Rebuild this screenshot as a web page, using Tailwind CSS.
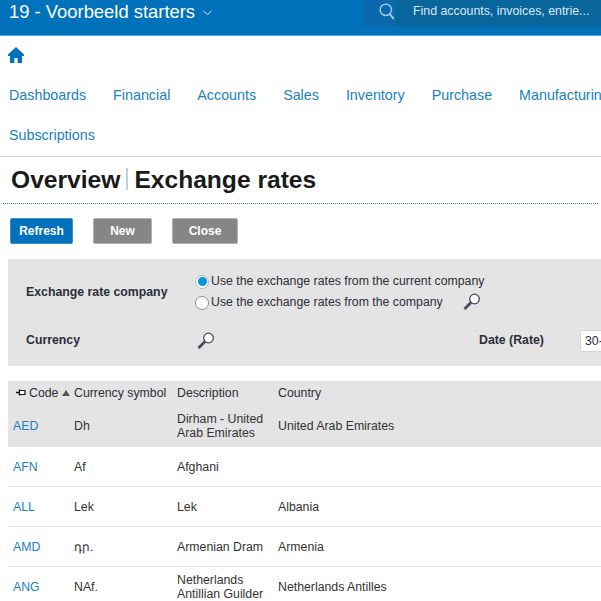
<!DOCTYPE html>
<html lang="en">
<head>
  <meta charset="UTF-8">
  <title>Exchange rates</title>
  <script src="https://cdn.jsdelivr.net/npm/@tailwindcss/browser@4"></script>
</head>
<body class="bg-white w-[601px] h-[601px] overflow-hidden font-['Liberation_Sans',Arial,sans-serif] text-[#333]">
  <!-- Top bar -->
  <header class="h-[36px] bg-[#0072bc] border-b border-[#5ba6d8] flex items-start justify-between">
    <div class="flex items-center h-[23px] pl-[9px] text-white text-[18.4px] leading-[23px]">
      <span>19 - Voorbeeld starters</span>
      <svg class="ml-[8px] mt-[3px]" width="9" height="6" viewBox="0 0 9 6" fill="none" stroke="#cfe4f3" stroke-width="1"><path d="M.5 1l4 3.5 4-3.5"/></svg>
    </div>
    <div class="w-[238px] h-[27px] flex bg-[#08669c]">
      <div class="w-[33px] h-full bg-[#0b68ac] flex items-start justify-end pt-[3px] pr-[1px]">
        <svg width="16" height="17" viewBox="0 0 16 17" fill="none" stroke="#a9d0ea" stroke-width="1.400"><circle cx="6.800" cy="6.800" r="5.700"/><path d="M10.800 11.200l4 4.600" stroke-width="2"/></svg>
      </div>
      <span class="pl-[17px] text-[#dde9f2] text-[12.35px] leading-[22px] whitespace-nowrap">Find accounts, invoices, entrie...</span>
    </div>
  </header>

  <!-- Home -->
  <div class="h-[38px] pl-[8px] pt-[11px]">
    <svg width="16" height="16" viewBox="0 0 16 16" fill="#0072bc"><path d="M8 0L0 7.600V9h2v7h4.400v-5h3.200v5H14V9h2V7.600z"/></svg>
  </div>

  <!-- Module nav -->
  <nav class="h-[83px] border-b border-[#d4d4d4] text-[#1b81c0] text-[14.3px] leading-[40px] pl-[9px] pt-[1px] overflow-hidden">
    <div class="flex gap-[27px] whitespace-nowrap">
      <a>Dashboards</a><a>Financial</a><a>Accounts</a><a>Sales</a><a>Inventory</a><a>Purchase</a><a>Manufacturing</a>
    </div>
    <div><a>Subscriptions</a></div>
  </nav>

  <!-- Page title -->
  <div class="mx-[3px] h-[47px] border-b border-dotted border-[#55808f] pl-[8px] pt-[8px] flex items-start text-[24.6px] leading-[29px] font-bold text-[#1a1a1a]">
    <span>Overview</span>
    <span class="w-[2px] h-[22px] mt-[3px] mx-[6px] bg-[#bcd3e2]"></span>
    <span>Exchange rates</span>
  </div>

  <!-- Buttons -->
  <div class="flex gap-[20px] pl-[10px] pt-[14px] text-white text-[12px] font-bold">
    <button class="w-[63px] h-[26px] rounded-[2px] bg-[#0072bc] border border-[#3d92c9]">Refresh</button>
    <button class="w-[59px] h-[26px] rounded-[2px] bg-[#868686] border border-[#b0b0b0]">New</button>
    <button class="w-[66px] h-[26px] rounded-[2px] bg-[#868686] border border-[#b0b0b0]">Close</button>
  </div>

  <!-- Filter panel -->
  <section class="ml-[8px] mt-[15px] h-[107px] bg-[#e4e4e4] bg-[radial-gradient(#d9d9d9_0.6px,transparent_0.7px)] bg-[size:11px_11px] text-[12.3px] text-[#2d2d3a] overflow-hidden">
    <div class="flex h-[71px]">
      <div class="w-[187px] pl-[18px] pt-[26px] font-bold leading-[14px]">Exchange rate company</div>
      <div class="pt-[12px]">
        <label class="flex items-center h-[21px]">
          <span class="w-[14px] h-[14px] rounded-full bg-white border border-[#9fbccd] flex items-center justify-center mr-[2px]"><span class="w-[9px] h-[9px] rounded-full bg-[#0a93d8]"></span></span>
          <span>Use the exchange rates from the current company</span>
        </label>
        <label class="flex items-center h-[21px]">
          <span class="w-[14px] h-[14px] rounded-full bg-white border border-[#8d8d8d] mr-[2px]"></span>
          <span>Use the exchange rates from the company</span>
          <svg class="ml-[20px] -mt-[1px]" width="18" height="18" viewBox="0 0 18 18" fill="none"><circle cx="11.500" cy="6" r="4.800" fill="#fff" stroke="#4a4a58" stroke-width="1.300"/><path d="M8 9.500L1.500 16" stroke="#4a4a68" stroke-width="2.800"/></svg>
        </label>
      </div>
    </div>
    <div class="flex items-center h-[21px]">
      <div class="w-[189px] shrink-0 pl-[18px] font-bold">Currency</div>
      <svg class="shrink-0" width="18" height="18" viewBox="0 0 18 18" fill="none"><circle cx="11.500" cy="6" r="4.800" fill="#fff" stroke="#4a4a58" stroke-width="1.300"/><path d="M8 9.500L1.500 16" stroke="#4a4a68" stroke-width="2.800"/></svg>
      <div class="ml-[264px] w-[101px] shrink-0 font-bold whitespace-nowrap">Date (Rate)</div>
      <div class="w-[60px] h-[22px] shrink-0 rounded-[2px] bg-white border border-[#d5d5d5] pl-[4px] leading-[20px]">30-</div>
    </div>
  </section>

  <!-- Table -->
  <table class="ml-[8px] mt-[15px] w-[593px] table-fixed border-collapse text-[12.3px] leading-[14px] text-[#333]">
    <colgroup><col class="w-[61px]"><col class="w-[103px]"><col class="w-[101px]"><col></colgroup>
    <thead class="bg-[#e4e4e4] text-[#2d2d3a]">
      <tr class="h-[24px] text-left font-normal">
        <th class="font-normal pl-[8px] whitespace-nowrap">
          <span class="inline-flex items-center">
            <svg width="10" height="8" viewBox="0 0 10 8" class="mr-[3px]"><path d="M0 3.500h3.500M3.500 .5v6" stroke="#111" stroke-width="1.400" fill="none"/><path d="M4 1.500h5v4H4" fill="#fff" stroke="#111" stroke-width="1.200"/></svg>Code<svg class="ml-[4px]" width="8" height="6" viewBox="0 0 8 6" fill="#555"><path d="M4 0l4 6H0z"/></svg>
          </span>
        </th>
        <th class="font-normal pl-[5px] whitespace-nowrap">Currency symbol</th>
        <th class="font-normal pl-[5px]">Description</th>
        <th class="font-normal pl-[5px]">Country</th>
      </tr>
    </thead>
    <tbody>
      <tr class="h-[42px] bg-[#e4e4e4]">
        <td class="pl-[5px] text-[#1b81c0]">AED</td><td class="pl-[5px]">Dh</td><td class="pl-[5px]">Dirham - United Arab Emirates</td><td class="pl-[5px]">United Arab Emirates</td>
      </tr>
      <tr class="h-[39px] border-b border-[#e2e2e2]">
        <td class="pl-[5px] pt-[2px] text-[#1b81c0]">AFN</td><td class="pl-[5px] pt-[2px]">Af</td><td class="pl-[5px] pt-[2px]">Afghani</td><td class="pl-[5px] pt-[2px]"></td>
      </tr>
      <tr class="h-[40px] border-b border-[#e2e2e2]">
        <td class="pl-[5px] pt-[2px] text-[#1b81c0]">ALL</td><td class="pl-[5px] pt-[2px]">Lek</td><td class="pl-[5px] pt-[2px]">Lek</td><td class="pl-[5px] pt-[2px]">Albania</td>
      </tr>
      <tr class="h-[40px] border-b border-[#e2e2e2]">
        <td class="pl-[5px] pt-[2px] text-[#1b81c0]">AMD</td><td class="pl-[5px] pt-[2px]">դր.</td><td class="pl-[5px] pt-[2px] whitespace-nowrap">Armenian Dram</td><td class="pl-[5px] pt-[2px]">Armenia</td>
      </tr>
      <tr class="h-[40px]">
        <td class="pl-[5px] pt-[2px] text-[#1b81c0]">ANG</td><td class="pl-[5px] pt-[2px]">NAf.</td><td class="pl-[5px] pt-[2px]">Netherlands Antillian Guilder</td><td class="pl-[5px] pt-[2px]">Netherlands Antilles</td>
      </tr>
    </tbody>
  </table>
</body>
</html>
